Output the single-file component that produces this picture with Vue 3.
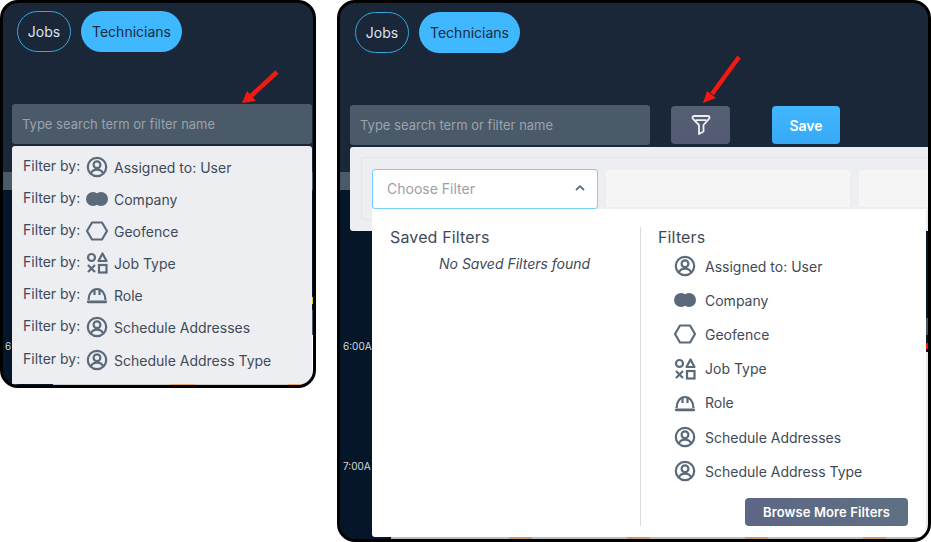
<script setup>
const filters = [
  { icon: 'user', label: 'Assigned to: User' },
  { icon: 'company', label: 'Company' },
  { icon: 'hex', label: 'Geofence' },
  { icon: 'shapes', label: 'Job Type' },
  { icon: 'helmet', label: 'Role' },
  { icon: 'user', label: 'Schedule Addresses' },
  { icon: 'user', label: 'Schedule Address Type' },
]
</script>

<template>
  <div class="page">
    <!-- left window -->
    <section class="win win-left">
      <div class="backdrop"><div class="band"></div><div class="body"></div></div>
      <span class="time t6 t-left">6:00A</span>
      <nav class="tabs tabs-left">
        <span class="pill pill-out">Jobs</span>
        <span class="pill pill-on">Technicians</span>
      </nav>
      <div class="search search-left">Type search term or filter name</div>
      <ul class="suggest">
        <li v-for="f in filters" :key="f.label" class="suggest-row">
          <span class="by">Filter by:</span>
          <svg class="ico" viewBox="0 0 24 24">
            <template v-if="f.icon === 'user'">
              <circle cx="12" cy="12" r="9.200" class="st" />
              <circle cx="12" cy="9.800" r="3.400" class="st" />
              <path d="M5.800 18.600c1-2.800 3.300-4 6.200-4s5.200 1.200 6.200 4" class="st" />
            </template>
            <template v-else-if="f.icon === 'company'">
              <circle cx="8" cy="12" r="7" class="fl" />
              <circle cx="16" cy="12" r="7" class="fl" />
            </template>
            <path v-else-if="f.icon === 'hex'" d="M7 3.500h10l5 8.500-5 8.500H7L2 12z" class="st" stroke-linejoin="round" />
            <template v-else-if="f.icon === 'shapes'">
              <circle cx="6.500" cy="6.500" r="3.500" class="st" />
              <path d="M17.500 2.500l4 7.500h-8z" class="st" stroke-linejoin="round" />
              <path d="M3 14l7 7M10 14l-7 7" class="st" />
              <rect x="14" y="14" width="7.500" height="7.500" class="st" />
            </template>
            <template v-else>
              <path d="M3.500 17c0-6.500 3.800-11 8.500-11s8.500 4.500 8.500 11" class="st" />
              <path d="M9.500 6.500v5.500M14.500 6.500v5.500" class="st" />
              <path d="M3.200 18.800h17.600" class="st thick" />
            </template>
          </svg>
          <span class="name">{{ f.label }}</span>
        </li>
      </ul>
      <div class="rail rail-left"></div>
      <div class="edge edge-left"></div>
      <svg class="arrow arrow-left" viewBox="0 0 40 40">
        <path d="M36 3L10 27" class="red" />
        <path d="M1 34l5-12 9 10z" fill="#f21a10" />
      </svg>
    </section>

    <!-- right window -->
    <section class="win win-right">
      <div class="backdrop"><div class="band"></div><div class="body"></div></div>
      <nav class="tabs tabs-right">
        <span class="pill pill-out">Jobs</span>
        <span class="pill pill-on">Technicians</span>
      </nav>
      <div class="toolbar">
        <div class="search search-right">Type search term or filter name</div>
        <button class="funnel">
          <svg viewBox="0 0 24 24" width="24" height="24">
            <path d="M3.500 4.500c0-1 .8-1.500 1.500-1.500h14c.8 0 1.500.5 1.500 1.500 0 .5-.2.900-.5 1.300l-5.500 6.200v6.500L10 21v-9L4 5.800c-.3-.4-.5-.8-.5-1.300z" fill="none" stroke="#eef0f3" stroke-width="1.800" stroke-linejoin="round" />
            <path d="M6.500 7.200h11" fill="none" stroke="#eef0f3" stroke-width="1.800" />
          </svg>
        </button>
        <button class="save">Save</button>
      </div>

      <div class="panel">
        <div class="panel-inner">
          <div class="select">
            <span>Choose Filter</span>
            <svg viewBox="0 0 12 12" width="12" height="12"><path d="M2 8l4-3.800L10 8" fill="none" stroke="#5c6b7a" stroke-width="1.800" /></svg>
          </div>
          <div class="slot"></div>
          <div class="slot slot-last"></div>
        </div>
      </div>

      <span class="time t6">6:00A</span>
      <span class="time t7">7:00A</span>

      <div class="rail rail-right"></div>
      <div class="edge edge-right"></div>

      <div class="menu">
        <div class="col col-saved">
          <h3>Saved Filters</h3>
          <p>No Saved Filters found</p>
        </div>
        <div class="col col-filters">
          <h3>Filters</h3>
          <ul class="flist">
            <li v-for="f in filters" :key="f.label" class="frow">
              <svg class="ico" viewBox="0 0 24 24">
                <template v-if="f.icon === 'user'">
                  <circle cx="12" cy="12" r="9.200" class="st" />
                  <circle cx="12" cy="9.800" r="3.400" class="st" />
                  <path d="M5.800 18.600c1-2.800 3.300-4 6.200-4s5.200 1.200 6.200 4" class="st" />
                </template>
                <template v-else-if="f.icon === 'company'">
                  <circle cx="8" cy="12" r="7" class="fl" />
                  <circle cx="16" cy="12" r="7" class="fl" />
                </template>
                <path v-else-if="f.icon === 'hex'" d="M7 3.500h10l5 8.500-5 8.500H7L2 12z" class="st" stroke-linejoin="round" />
                <template v-else-if="f.icon === 'shapes'">
                  <circle cx="6.500" cy="6.500" r="3.500" class="st" />
                  <path d="M17.500 2.500l4 7.500h-8z" class="st" stroke-linejoin="round" />
                  <path d="M3 14l7 7M10 14l-7 7" class="st" />
                  <rect x="14" y="14" width="7.500" height="7.500" class="st" />
                </template>
                <template v-else>
                  <path d="M3.500 17c0-6.500 3.800-11 8.500-11s8.500 4.500 8.500 11" class="st" />
                  <path d="M9.500 6.500v5.500M14.500 6.500v5.500" class="st" />
                  <path d="M3.200 18.800h17.600" class="st thick" />
                </template>
              </svg>
              <span class="name">{{ f.label }}</span>
            </li>
          </ul>
          <div class="browse-row"><button class="browse">Browse More Filters</button></div>
        </div>
      </div>

      <svg class="arrow arrow-right" viewBox="0 0 40 52">
        <path d="M37 3L10 40" class="red" />
        <path d="M1 49l4-12 9 7z" fill="#f21a10" />
      </svg>
    </section>
  </div>
</template>

<style>
html, body { margin: 0; background: #fff; }
</style>

<style scoped>
.page {
  width: 931px;
  height: 542px;
  display: flex;
  align-items: flex-start;
  gap: 21px;
  font-family: Inter, "Liberation Sans", sans-serif;
  overflow: hidden;
}
.win {
  position: relative;
  box-sizing: border-box;
  border: 3px solid #000;
  border-radius: 18px;
  overflow: hidden;
  background: #1a2739;
  flex: none;
}
.win-left { width: 316px; height: 388px; }
.win-right { width: 594px; height: 542px; }

.backdrop {
  position: absolute;
  inset: 169px 0 0 0;
  display: flex;
  flex-direction: column;
}
.band { height: 18px; background: #4b5a68; }
.body { flex: 1; background: #041627; }

.tabs { display: flex; gap: 10px; position: relative; }
.tabs-left { padding: 8px 0 0 14px; }
.tabs-right { padding: 9px 0 0 15px; }
.pill {
  box-sizing: border-box;
  height: 41px;
  border-radius: 21px;
  display: flex;
  align-items: center;
  justify-content: center;
  font-size: 14px;
}
.pill-out { width: 54px; border: 1px solid #38a6dc; color: #dfe4ea; }
.pill-on { width: 101px; background: #3fb8ff; color: #1a2b3e; }

.search {
  box-sizing: border-box;
  width: 300px;
  height: 40px;
  background: #4b5a68;
  border-radius: 3px;
  color: #9aa3ad;
  font-size: 13px;
  padding: 0 0 1px 10px;
  display: flex;
  align-items: center;
  position: relative;
}
.search-left { margin: 52px 0 0 9px; }

.suggest {
  position: relative;
  list-style: none;
  box-sizing: border-box;
  width: 300px;
  height: 240px;
  margin: 2px 0 0 9px;
  padding: 5px 0 0 11px;
  background: #edeef2;
  border-radius: 3px 3px 0 0;
}
.suggest-row {
  display: flex;
  align-items: center;
  height: 32px;
  color: #3f4a58;
  font-size: 14px;
}
.suggest-row:last-child { margin-top: 1px; }
.by { width: 62px; position: relative; top: -2px; }
.suggest-row .ico { margin-right: 5px; }

.ico { width: 24px; height: 24px; flex: none; }
.st { fill: none; stroke: #5a6a7b; stroke-width: 2.200; }
.thick { stroke-width: 2.800; stroke-linecap: round; }
.fl { fill: #5a6a7b; }
.name { white-space: nowrap; }

.toolbar {
  position: relative;
  display: flex;
  align-items: center;
  margin: 52px 0 0 10px;
}
.search-right { flex: none; }
.funnel {
  width: 59px;
  height: 38px;
  margin-left: 21px;
  border: 0;
  border-radius: 4px;
  background: linear-gradient(180deg, #535f72, #535a75);
  display: flex;
  align-items: center;
  justify-content: center;
  padding: 0;
}
.save {
  width: 68px;
  height: 38px;
  margin-left: 42px;
  border: 0;
  border-radius: 4px;
  background: linear-gradient(180deg, #40b7ff, #38a9f5);
  color: #fff;
  font: 600 14px Inter, "Liberation Sans", sans-serif;
}

.panel {
  position: relative;
  box-sizing: border-box;
  width: 578px;
  height: 84px;
  margin: 2px 0 0 10px;
  padding: 10px 0 0 11px;
  background: #edeef2;
  border-radius: 3px 0 0 3px;
}
.panel-inner {
  box-sizing: border-box;
  height: 63px;
  border: 1px solid #e3e5e9;
  border-right: 0;
  border-radius: 3px 0 0 3px;
  padding: 11px 0 0 10px;
  display: flex;
  gap: 7px;
  overflow: hidden;
}
.select {
  box-sizing: border-box;
  width: 226px;
  height: 40px;
  flex: none;
  background: #fff;
  border: 1px solid #74cffc;
  border-radius: 3px;
  display: flex;
  align-items: center;
  justify-content: space-between;
  padding: 0 11px 2px 14px;
  color: #9a9fa7;
  font-size: 14px;
}
.slot {
  box-sizing: border-box;
  width: 246px;
  height: 39px;
  flex: none;
  background: #f5f5f6;
  border: 1px solid #ecedf0;
  border-radius: 3px;
}
.slot-last { width: 100px; }

.time {
  position: absolute;
  left: 3px;
  color: #d5d9de;
  font-size: 10px;
  line-height: 12px;
  white-space: nowrap;
}
.t-left { left: 2px; }
.t6 { top: 337px; }
.t7 { top: 457px; }

.rail { position: absolute; }
.rail-left {
  left: 309px;
  top: 280px;
  width: 1px;
  height: 102px;
  background: linear-gradient(180deg, #041627 0 14px, #e8c820 14px 21px, #041627 21px 27px, #4b5a68 27px 52px, #fff 52px);
}
.rail-right {
  left: 586px;
  top: 315px;
  width: 2px;
  height: 221px;
  background: linear-gradient(180deg, #4b5a68 0 17px, #041627 17px 25px, #f21a10 25px 31px, #041627 31px 34px, #e6e8ec 34px);
}
.edge { position: absolute; }
.edge-left {
  left: 9px;
  top: 381px;
  width: 300px;
  height: 1px;
  background: linear-gradient(90deg, #041627 0 41px, #c9ccd1 41px 158px, #e8a66a 158px 183px, #c9ccd1 183px 276px, #e8a66a 276px 293px, #c9ccd1 293px);
}
.edge-right {
  left: 32px;
  top: 534px;
  width: 554px;
  height: 2px;
  background: linear-gradient(90deg, #041627 0 19px, #b9bcc0 19px 137px, #c99a72 137px 160px, #b9bcc0 160px 255px, #c99a72 255px 278px, #b9bcc0 278px 373px, #c99a72 373px 396px, #b9bcc0 396px 491px, #c99a72 491px 514px, #b9bcc0 514px);
}

.menu {
  position: absolute;
  left: 32px;
  top: 206px;
  width: 554px;
  height: 328px;
  background: #fff;
  border-radius: 0 0 3px 3px;
  box-sizing: border-box;
  padding-top: 18px;
  display: flex;
}
.col h3 {
  margin: 0;
  font-size: 16px;
  font-weight: 400;
  line-height: 20px;
  color: #3f4a58;
  letter-spacing: .15px;
}
.col-saved {
  width: 269px;
  box-sizing: border-box;
  padding-left: 18px;
  border-right: 1px solid #d9dadd;
  height: 299px;
}
.col-saved p {
  margin: 8px 0 0 49px;
  font-size: 14px;
  font-style: italic;
  line-height: 18px;
  color: #3f4a58;
}
.col-filters {
  flex: 1;
  padding-left: 17px;
  display: flex;
  flex-direction: column;
}
.flist { list-style: none; margin: 2px 0 0; padding: 0 0 0 15px; }
.frow {
  display: flex;
  align-items: center;
  gap: 8px;
  height: 34.200px;
  color: #3f4a58;
  font-size: 14px;
}
.browse-row {
  display: flex;
  justify-content: flex-end;
  padding-right: 18px;
  margin-top: 10px;
}
.browse {
  width: 163px;
  height: 28px;
  border: 0;
  border-radius: 4px;
  background: linear-gradient(90deg, #5e6685, #5f7083);
  color: #fff;
  font: 600 13px Inter, "Liberation Sans", sans-serif;
  letter-spacing: .1px;
  padding: 0;
}

.arrow { position: absolute; }
.arrow-left { left: 238px; top: 66px; width: 40px; height: 40px; }
.arrow-right { left: 362px; top: 51px; width: 40px; height: 52px; }
.red { fill: none; stroke: #f21a10; stroke-width: 4.500; }
</style>
